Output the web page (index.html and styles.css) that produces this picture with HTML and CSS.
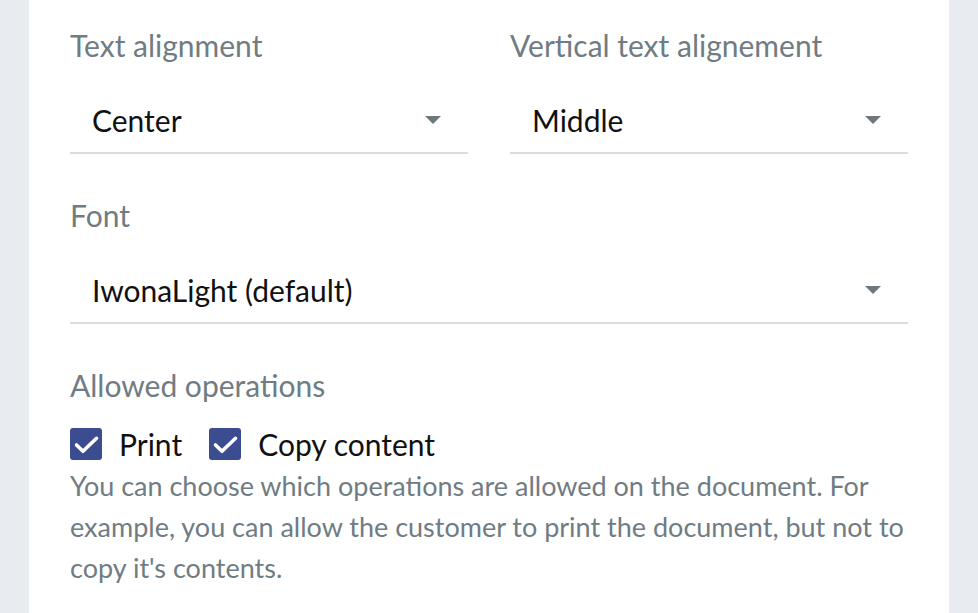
FILE: index.html
```html
<!DOCTYPE html>
<html>
<head>
<meta charset="utf-8">
<link rel="stylesheet" href="styles.css">
</head>
<body>
<div class="panel">
  <div class="row">
    <div class="field">
      <div class="label">Text alignment</div>
      <div class="select"><span>Center</span><span class="caret"></span></div>
    </div>
    <div class="field">
      <div class="label">Vertical text alignement</div>
      <div class="select"><span>Middle</span><span class="caret"></span></div>
    </div>
  </div>
  <div class="field font-field">
    <div class="label">Font</div>
    <div class="select"><span>IwonaLight (default)</span><span class="caret"></span></div>
  </div>
  <div class="ops">
    <div class="label">Allowed operations</div>
    <div class="checks">
      <label class="check"><span class="box"><svg viewBox="0 0 32 32" width="32" height="32"><path d="M6.5 17 L13 23.3 L26.5 10.3" fill="none" stroke="#fff" stroke-width="3.6" stroke-linecap="round" stroke-linejoin="round"/></svg></span>Print</label>
      <label class="check"><span class="box"><svg viewBox="0 0 32 32" width="32" height="32"><path d="M6.5 17 L13 23.3 L26.5 10.3" fill="none" stroke="#fff" stroke-width="3.6" stroke-linecap="round" stroke-linejoin="round"/></svg></span>Copy content</label>
    </div>
    <p class="help">You can choose which operations are allowed on the document. For example, you can allow the customer to print the document, but not to copy it's contents.</p>
  </div>
</div>
</body>
</html>
```

FILE: styles.css
```css
html, body {
  margin: 0;
  padding: 0;
  height: 100%;
}
body {
  background: #e8ebf0;
  font-family: Lato, "Liberation Sans", sans-serif;
}
.panel {
  margin: 0 29px;
  background: #fff;
  min-height: 100%;
  padding: 28px 41px 0;
  box-sizing: border-box;
}
.row {
  display: flex;
  gap: 42px;
}
.row .field {
  flex: 1;
}
.label {
  color: #6f7c83;
  font-size: 30px;
  line-height: 34px;
}
.select {
  display: flex;
  align-items: center;
  justify-content: space-between;
  height: 62px;
  margin-top: 30px;
  padding: 0 27px 4px 22px;
  border-bottom: 2px solid #dcdcdc;
  color: #111;
  font-size: 30px;
  box-sizing: border-box;
}
.caret {
  width: 0;
  height: 0;
  border-left: 8px solid transparent;
  border-right: 8px solid transparent;
  border-top: 8px solid #6e777b;
}
.font-field {
  margin-top: 44px;
}
.ops {
  margin-top: 44px;
}
.checks {
  display: flex;
  gap: 27px;
  margin-top: 26px;
}
.check {
  display: flex;
  align-items: center;
  gap: 17px;
  font-size: 30px;
  color: #111;
  height: 32px;
}
.box {
  width: 32px;
  height: 32px;
  border-radius: 3px;
  background: #3b4c91;
  display: block;
}
.box svg {
  display: block;
}
.help {
  margin: 5px 0 0;
  color: #6f7c83;
  font-size: 27px;
  line-height: 41px;
}
```
